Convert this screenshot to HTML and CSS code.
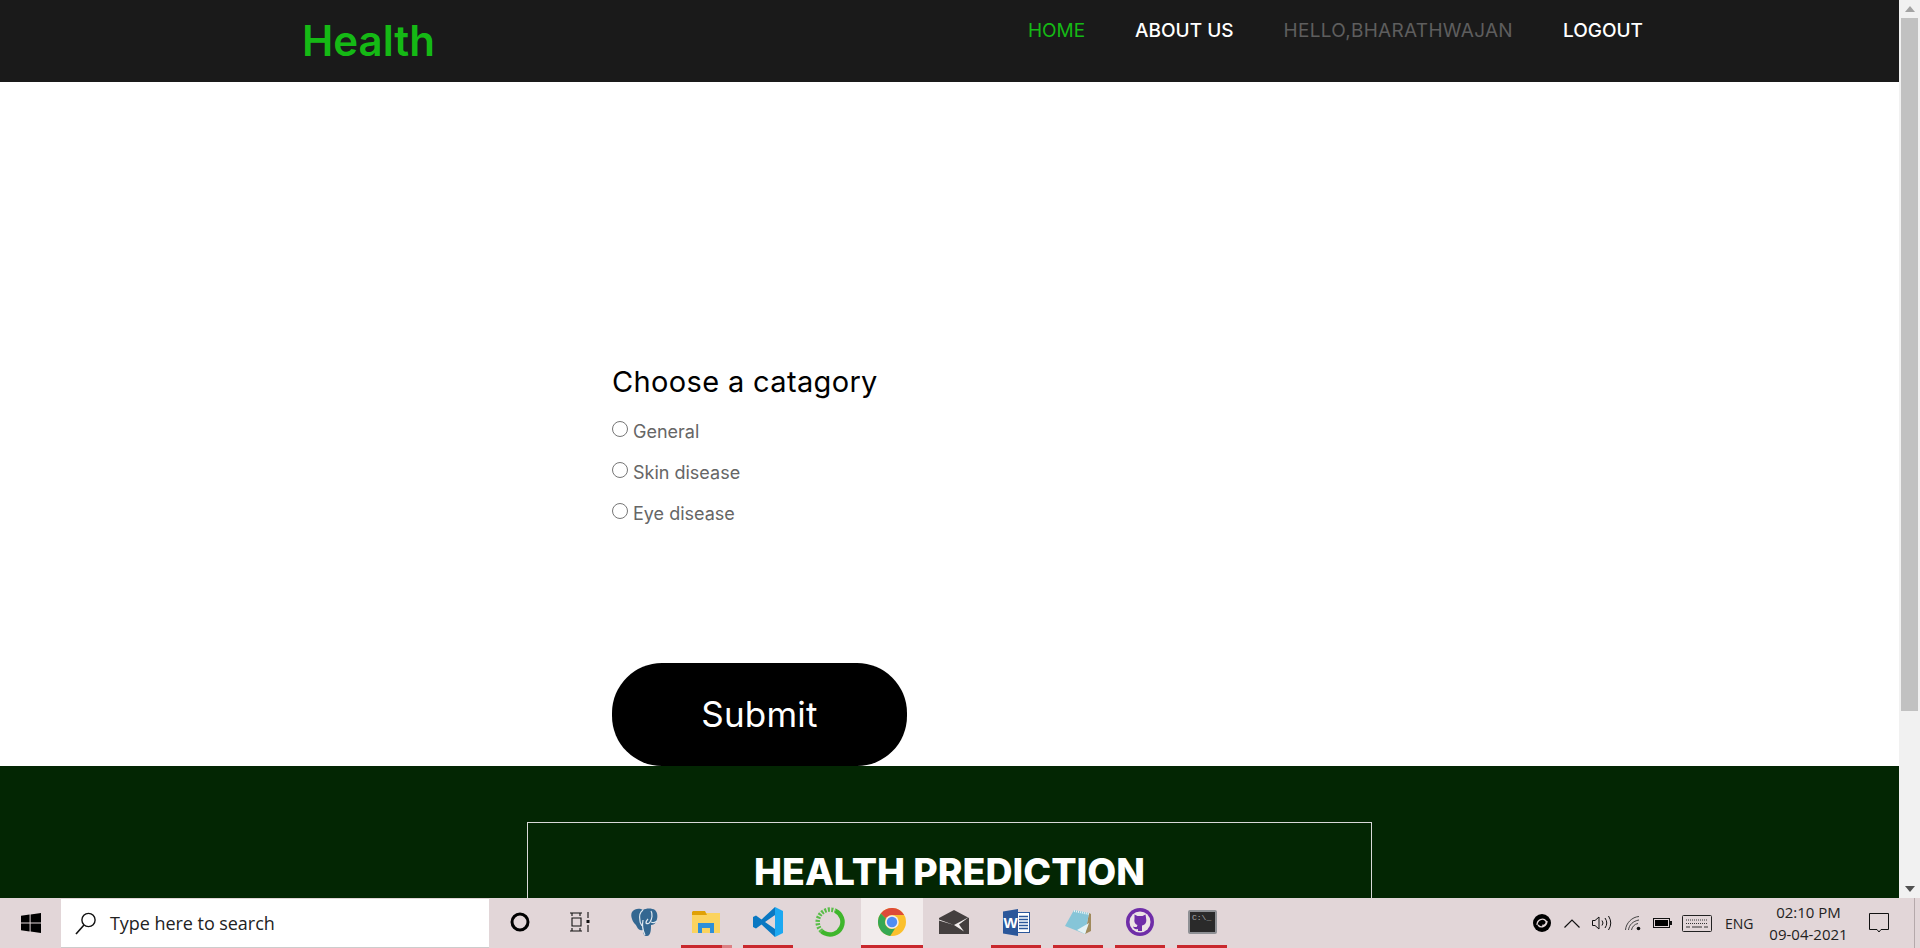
FILE: index.html
```html
<!DOCTYPE html>
<html lang="en">
<head>
<meta charset="utf-8">
<title>Health</title>
<link rel="stylesheet" href="styles.css">
</head>
<body>
<div class="screen">
  <div class="window">
    <div class="page">
      <header class="nav">
        <a class="logo">Health</a>
        <nav class="links">
          <a class="link active">HOME</a>
          <a class="link">ABOUT US</a>
          <a class="link muted">HELLO,BHARATHWAJAN</a>
          <a class="link">LOGOUT</a>
        </nav>
      </header>
      <main class="content">
        <form class="form">
          <h2 class="form-title">Choose a catagory</h2>
          <label class="option"><span class="radio"></span><span>General</span></label>
          <label class="option"><span class="radio"></span><span>Skin disease</span></label>
          <label class="option"><span class="radio"></span><span>Eye disease</span></label>
          <button class="submit" type="button">Submit</button>
        </form>
      </main>
      <footer class="footer">
        <div class="footer-box">
          <h2 class="footer-title">HEALTH PREDICTION</h2>
        </div>
      </footer>
    </div>
    <div class="scrollbar">
      <svg class="arrow" width="10" height="6" viewBox="0 0 10 6"><path d="M0 6 5 0l5 6z" fill="#a3a3a3"/></svg>
      <div class="thumb"></div>
      <div class="track"></div>
      <svg class="arrow" width="10" height="6" viewBox="0 0 10 6"><path d="M0 0h10L5 6z" fill="#505050"/></svg>
    </div>
  </div>
  <div class="taskbar">
    <div class="start">
      <svg width="20" height="20" viewBox="0 0 20 20"><path d="M0 2.800 8.600 1.600v7.900H0zM9.600 1.400 20 0v9.500H9.600zM0 10.500h8.600v7.900L0 17.200zM9.600 10.500H20V20L9.600 18.600z" fill="#000"/></svg>
    </div>
    <div class="search">
      <svg width="22" height="24" viewBox="0 0 22 24"><circle cx="13.500" cy="9" r="6.600" fill="none" stroke="#111" stroke-width="1.400"/><path d="M9 14 1 23" stroke="#111" stroke-width="1.600" fill="none"/></svg>
      <span class="search-text">Type here to search</span>
    </div>
    <div class="task-btn">
      <svg width="22" height="22" viewBox="0 0 22 22"><circle cx="11" cy="11" r="8" fill="none" stroke="#000" stroke-width="3"/></svg>
    </div>
    <div class="task-btn shift">
      <svg width="20" height="20" viewBox="0 0 20 20"><g fill="none" stroke="#111" stroke-width="1.100"><path d="M0 1h12M2 1v3M10 1v3M2 6h9v8H2zM0 19h12M2 16v3M10 16v3M18 0v6M18 13v7"/></g><rect x="16.500" y="8" width="3" height="3" fill="#111"/></svg>
    </div>
    <div class="task-btn">
      <svg width="28" height="29" viewBox="0 0 28 29"><path d="M2 4C5 0 10 0 13 2c3-2 9-2 12 0 3 3 3 8 1 12-1 2-3 3-5 3 0 4 0 11-4 11-3 0-4-2-4-6-3 1-5-1-6-3C6 16 3 15 2 11 1 8 1 6 2 4z" fill="#336791"/><path d="M13 2c-3 2-4 6-3 11 0 2 1 3 2 5M21 3c2 3 1 8-1 11-1 2-3 2-4 1 0-2 1-3 2-4M13 12c-1 5 0 11 2 15M21 14c2 1 4 1 6-1" fill="none" stroke="#dfe8ef" stroke-width="1.200"/></svg>
    </div>
    <div class="task-btn running partial">
      <svg width="28" height="22" viewBox="0 0 28 22"><path d="M0 2h28v20H0z" fill="#fbd35e"/><path d="M1 0h12l2 4H0V1z" fill="#e0a106"/><path d="M6 12h16v10h-4v-5h-8v5H6z" fill="#2f8fd8"/></svg>
    </div>
    <div class="task-btn running">
      <svg width="30" height="30" viewBox="0 0 30 30"><path d="M22 0 8.500 12.500 3 8.500 0 10v10l3 1.500 5.500-4L22 30zM22 8 12 15l10 7z" fill="#0a78c2" fill-rule="evenodd"/><path d="M22 0 30 4v22l-8 4z" fill="#1ca8f1"/></svg>
    </div>
    <div class="task-btn">
      <svg width="30" height="30" viewBox="0 0 30 30"><circle cx="15" cy="15" r="12.500" fill="none" stroke="#3fb62c" stroke-width="4.500" pathLength="100" stroke-dasharray="55 45" transform="rotate(-65 15 15)"/><path d="M6.500 24.100A12.500 12.500 0 0 1 20.300 3.700" fill="none" stroke="#59bd48" stroke-width="4.500" stroke-dasharray="2 1.400"/></svg>
    </div>
    <div class="task-btn running current">
      <svg width="28" height="28" viewBox="0 0 28 28"><circle cx="14" cy="14" r="14" fill="#fbc02d"/><path d="M2.800 5.600A14 14 0 0 1 26.100 7H14a7 7 0 0 0-6.100 3.500z" fill="#dd4b39"/><path d="M2.800 5.600A14 14 0 0 0 12.200 27.900L17.200 20.200a7 7 0 0 1-9.300-2.700 7 7 0 0 1 0-7z" fill="#36a852"/><circle cx="14" cy="14" r="6.800" fill="#f3eded"/><circle cx="14" cy="14" r="5.200" fill="#4f8df5"/></svg>
    </div>
    <div class="task-btn">
      <svg width="30" height="24" viewBox="0 0 30 24"><path d="M15 0 30 8v16H0V8z" fill="#443f3f"/><path d="M0 9.500 15 15l15-8-10 7.500 5 7-10-6.500L0 10.500z" fill="#f2eded"/></svg>
    </div>
    <div class="task-btn running">
      <svg width="27" height="27" viewBox="0 0 27 27"><rect x="8.500" y="3.500" width="18" height="20" fill="#fff" stroke="#2b579a"/><path d="M16 7.500h9M16 10.500h9M16 13.500h9M16 16.500h9M16 19.500h9" stroke="#2b579a" stroke-width="1.300"/><path d="M0 2.500 15 0v27L0 24.500z" fill="#2b579a"/><text x="7.500" y="18.500" class="word-w">W</text></svg>
    </div>
    <div class="task-btn running">
      <svg width="28" height="26" viewBox="0 0 28 26"><path d="M25 4 27 5v17l-6 3z" fill="#a08a5c"/><path d="M10 1 25 4 21 25 1 17z" fill="#86c5d8"/><path d="M21 25 13 21l12-7z" fill="#e6f2f4"/><path d="M10 2 25 5" stroke="#eef5f6" stroke-width="2" stroke-dasharray="1 1" fill="none"/></svg>
    </div>
    <div class="task-btn running">
      <svg width="28" height="28" viewBox="0 0 28 28"><circle cx="14" cy="14" r="14" fill="#6f2da8"/><circle cx="14" cy="14" r="10.500" fill="#ece3e5"/><path d="M8.500 6.500 11.500 8h5l3-1.500.7 4.500c.6 3.500-1.200 6-4.200 6.500V23h-4v-2c-2.500.7-4.200 0-5-2.500 1.500.7 2.500.7 3.700.5l.8-2c-2.500-.8-3.700-3-3-6z" fill="#6f2da8"/></svg>
    </div>
    <div class="task-btn running">
      <svg width="29" height="24" viewBox="0 0 29 24"><rect x="1" y="1" width="27" height="22" rx="1" fill="#2a2a2a" stroke="#8e9094" stroke-width="2"/><text x="4" y="10" class="cmd-text">C:\_</text></svg>
    </div>
    <div class="tray">
      <svg class="tray-swirl" width="18" height="18" viewBox="0 0 18 18"><circle cx="9" cy="9" r="9" fill="#000"/><path d="M4 11c0-5 6-8 9-4 1 3-2 5-4 4M14 7c0 5-6 8-9 4" fill="none" stroke="#e2d6d8" stroke-width="1.300"/></svg>
      <svg class="tray-caret" width="16" height="9" viewBox="0 0 16 9"><path d="M.5 8.500 8 1l7.500 7.500" fill="none" stroke="#111" stroke-width="1.200"/></svg>
      <svg class="tray-speaker" width="20" height="16" viewBox="0 0 20 16"><path d="M.5 5.500H3L7 2v12l-4-3.500H.5z" fill="none" stroke="#111"/><path d="M10 5.500q2 2.500 0 5M13 3q3.500 5 0 10M16.500 1q4.500 7 0 14" fill="none" stroke="#111"/></svg>
      <svg class="tray-wifi" width="16" height="16" viewBox="0 0 16 16"><path d="M.5 15C1 8 7 2 14 1.500M3.500 15C4 10 8 6 14 5M6.500 15c.5-3 3-6 6.500-6.500" fill="none" stroke="#444"/><circle cx="13.500" cy="13.500" r="1.800" fill="#111"/></svg>
      <svg class="tray-battery" width="19" height="10" viewBox="0 0 19 10"><rect x=".5" y=".5" width="16" height="9" fill="none" stroke="#111"/><rect x="2" y="2" width="13" height="6" fill="#000"/><rect x="17" y="3" width="2" height="4" fill="#111"/></svg>
      <svg class="tray-keyboard" width="30" height="17" viewBox="0 0 30 17"><rect x=".5" y=".5" width="29" height="16" rx="1" fill="none" stroke="#222"/><path d="M4 5h22M4 8.500h22" stroke="#333" stroke-dasharray="1 1"/><path d="M4 12h4M10 12h10M22 12h4" stroke="#333"/></svg>
      <span class="tray-lang">ENG</span>
      <div class="clock"><span>02:10 PM</span><span>09-04-2021</span></div>
      <svg class="tray-note" width="20" height="20" viewBox="0 0 20 20"><path d="M.5.500h19v16H12l-2 2.500-2-2.500H.5z" fill="none" stroke="#111"/></svg>
      <div class="show-desktop"></div>
    </div>
  </div>
</div>
</body>
</html>
```

FILE: styles.css
```css
* { box-sizing: border-box; }
html, body { margin: 0; height: 100%; overflow: hidden; }
body { font-family: Inter, "Liberation Sans", sans-serif; background: #fff; }

.screen { width: 1920px; height: 948px; display: flex; flex-direction: column; overflow: hidden; }
.window { height: 898px; display: flex; flex: none; }
.page { width: 1899px; flex: none; overflow: hidden; }

.nav { height: 82px; background: #1a1a1a; display: flex; justify-content: space-between; padding: 0 256px 0 302px; }
.logo { font-size: 42px; font-weight: 600; color: #15b915; line-height: 82px; }
.links { display: flex; gap: 50px; padding-top: 17px; }
.link { font-size: 19px; font-weight: 500; line-height: 28px; color: #fff; }
.active { color: #15b915; font-weight: 400; }
.muted { color: #5e5e5e; font-weight: 400; letter-spacing: .3px; }

.content { height: 684px; padding: 278px 0 0 612px; }
.form { display: flex; flex-direction: column; align-items: flex-start; }
.form-title { margin: 0 0 7px; font-size: 29px; font-weight: 400; line-height: 44px; letter-spacing: .35px; color: #000; }
.option { display: flex; align-items: center; gap: 5px; height: 41px; font-size: 18px; color: #666; }
.radio { width: 16px; height: 16px; border: 1px solid #767676; border-radius: 50%; background: #fff; margin-top: -5px; }
.submit { margin-top: 129px; padding: 0 0 2px; width: 295px; height: 103px; border: 0; border-radius: 50px; background: #000; color: #fff; font: 400 35px Inter, "Liberation Sans", sans-serif; letter-spacing: .2px; }

.footer { height: 300px; background: #032603; padding-top: 56px; }
.footer-box { width: 845px; height: 200px; margin: 0 auto; border: 1px solid #d8d8d8; padding-top: 24px; }
.footer-title { margin: 0; font-size: 37.5px; font-weight: 800; line-height: 50px; color: #fff; text-align: center; }

.scrollbar { width: 21px; flex: none; background: #f1f1f1; display: flex; flex-direction: column; align-items: center; }
.arrow { flex: none; margin: 6px 0; }
.thumb { width: 17px; height: 693px; background: #c1c1c1; flex: none; }
.track { flex: 1; }

.taskbar { height: 50px; flex: none; background: #e2d6d8; display: flex; align-items: stretch; }
.start { width: 61px; display: flex; align-items: center; justify-content: center; }
.search { width: 428px; margin-top: 1px; background: #fff; display: flex; align-items: center; padding-left: 14px; gap: 13px; border-bottom: 1px solid #ccc; }
.search-text { font: 400 18px "Open Sans", sans-serif; color: #222; letter-spacing: -.05px; }
.task-btn { width: 62px; flex: none; display: flex; align-items: center; justify-content: center; position: relative; padding-bottom: 2px; }
.shift { padding-right: 4px; }
.running::after { content: ""; position: absolute; left: 6px; right: 6px; bottom: 0; height: 3px; background: #c9282d; }
.partial::after { right: 15px; }
.partial::before { content: ""; position: absolute; left: 47px; width: 10px; bottom: 0; height: 3px; background: #dc8084; }
.current { background: #f2ecec; }
.current::after { left: 0; right: 0; }
.word-w { font: 700 15px "Liberation Sans", sans-serif; fill: #fff; text-anchor: middle; }
.cmd-text { font: 400 8px "Liberation Mono", monospace; fill: #aaa; }

.tray { flex: 1; position: relative; display: flex; align-items: center; padding-left: 300px; }
.tray-caret { margin-left: 13px; }
.tray-speaker { margin-left: 12px; }
.tray-wifi { margin-left: 13px; }
.tray-battery { margin-left: 12px; }
.tray-keyboard { margin-left: 10px; }
.tray-lang { margin-left: 13px; font: 400 14px "Open Sans", sans-serif; color: #222; }
.clock { width: 82px; margin-left: 14px; display: flex; flex-direction: column; align-items: center; gap: 4px; font: 400 15px/18px "Open Sans", sans-serif; color: #222; }
.tray-note { margin-left: 19px; }
.show-desktop { position: absolute; top: 0; right: 5px; width: 1px; height: 50px; background: #b5a9ab; }
```
